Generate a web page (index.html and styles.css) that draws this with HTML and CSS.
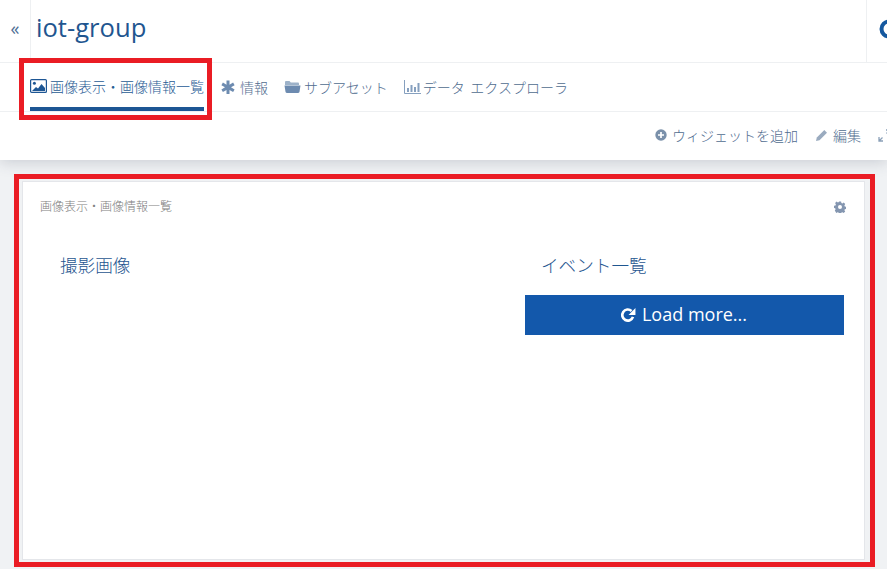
FILE: index.html
```html
<!DOCTYPE html>
<html lang="ja">
<head>
<meta charset="utf-8">
<title>iot-group</title>
<link rel="stylesheet" href="styles.css">
</head>
<body>
<header class="top">
  <div class="title-row">
    <div class="collapse">«</div>
    <h1 class="title">iot-group</h1>
    <div class="title-end"><svg class="round" viewBox="0 0 20 20"><circle cx="10" cy="10" r="7.5"/></svg></div>
  </div>
  <nav class="tabs">
    <a class="tab active">
      <svg class="ico ico-img" viewBox="0 0 17 14"><rect x=".6" y=".6" width="15.8" height="12.8" rx="1" fill="none" stroke="currentColor" stroke-width="1.2"/><circle cx="4.4" cy="4.3" r="1.5" fill="currentColor"/><path d="M2 12l4-4 2 1.6L11.500 5l3.500 4v3z" fill="currentColor"/></svg>
      <span>画像表示・画像情報一覧</span>
    </a>
    <a class="tab tab-info">
      <svg class="ico ico-ast" viewBox="0 0 14 14"><path d="M5.500 0.500h3v4.200l3.600-2.100 1.500 2.600L10 7.300l3.600 2.100-1.500 2.600-3.600-2.100v4.100h-3V10l-3.600 2-1.500-2.600L4 7.300.4 5.200l1.500-2.600 3.600 2.100z" fill="currentColor"/></svg>
      <span>情報</span>
    </a>
    <a class="tab tab-sub">
      <svg class="ico ico-folder" viewBox="0 0 17 13"><path d="M1 5V2.200C1 1.500 1.500 1 2.200 1h3.300l1.300 1.500h7c.7 0 1.200.5 1.200 1.200V5z" fill="#9db2c9"/><path d="M.5 5.600h16l-1 6.200c-.1.700-.6 1.200-1.300 1.200H2.800c-.7 0-1.200-.5-1.300-1.200z" fill="currentColor"/></svg>
      <span>サブアセット</span>
    </a>
    <a class="tab tab-chart">
      <svg class="ico ico-chart" viewBox="0 0 17 14"><path d="M.5 0v13.500H17" fill="none" stroke="currentColor" stroke-width="1"/><path d="M3 8h2v4H3zM6.500 5h2v7h-2zM10 7h2v5h-2zM13.500 3h2v9h-2z" fill="currentColor"/></svg>
      <span>データ エクスプローラ</span>
    </a>
  </nav>
  <div class="actions">
    <a class="action">
      <svg class="ico ico-plus" viewBox="0 0 12 12"><circle cx="6" cy="6" r="5.700" fill="currentColor"/><path d="M6 3v6M3 6h6" stroke="#fff" stroke-width="1.700"/></svg>
      <span>ウィジェットを追加</span>
    </a>
    <a class="action">
      <svg class="ico ico-pen" viewBox="0 0 13 13"><path d="M9.300 1l2.700 2.700-7.500 7.500L1 12l.8-3.500z" fill="currentColor"/></svg>
      <span>編集</span>
    </a>
    <a class="action">
      <svg class="ico ico-expand" viewBox="0 0 13 13"><path d="M8 1h4v4M12 1L8.500 4.500M5 12H1V8M1 12l3.500-3.500" fill="none" stroke="currentColor" stroke-width="1.300"/></svg>
    </a>
  </div>
</header>
<main class="content">
  <section class="card">
    <div class="card-head">
      <span class="card-title">画像表示・画像情報一覧</span>
      <svg class="gear" viewBox="0 0 12 12"><path fill-rule="evenodd" d="M4.900.5h2.200l.3 1.500 1 .4 1.300-.8 1.500 1.500-.8 1.300.4 1 1.500.3v2.200l-1.500.3-.4 1 .8 1.300-1.500 1.500-1.300-.8-1 .4-.3 1.500H4.900l-.3-1.500-1-.4-1.300.8L.8 9.500l.8-1.300-.4-1L0 6.900V4.700l1.500-.3.4-1-.8-1.300L2.600.6l1.300.8 1-.4zM6 4a2 2 0 1 0 0 4 2 2 0 0 0 0-4z"/></svg>
    </div>
    <div class="columns">
      <div class="col col-left">
        <h2 class="col-title">撮影画像</h2>
      </div>
      <div class="col col-right">
        <h2 class="col-title">イベント一覧</h2>
        <button class="load">
          <svg class="load-ico" viewBox="0 0 15 15"><path d="M12.200 9.300A5.200 5.200 0 1 1 10.800 3.700" fill="none" stroke="currentColor" stroke-width="2.500"/><path d="M14.500 1v6.500H8z" fill="currentColor"/></svg>
          <span>Load more...</span>
        </button>
      </div>
    </div>
  </section>
</main>
<div class="mark mark-tab"></div>
<div class="mark mark-card"></div>
</body>
</html>
```
FILE: styles.css
```css
* { box-sizing: border-box; }
html, body { height: 100%; }
body {
  margin: 0;
  width: 887px;
  height: 569px;
  overflow: hidden;
  position: relative;
  background: #f0f2f4;
  font-family: "Open Sans", "Noto Sans CJK JP", sans-serif;
  color: #49688f;
}
.top {
  background: #fff;
  height: 160px;
  box-shadow: 0 2px 14px rgba(60, 70, 90, .22);
  position: relative;
}
.title-row {
  height: 63px;
  display: flex;
  align-items: stretch;
  border-bottom: 1px solid #eef0f2;
}
.collapse {
  width: 31px;
  border-right: 1px solid #eef0f2;
  font-size: 18px;
  line-height: 57px;
  text-align: center;
  color: #4f6f96;
}
.title {
  flex: 1;
  margin: 0;
  padding-left: 5px;
  font-size: 25.600px;
  font-weight: 400;
  line-height: 55px;
  color: #1f5690;
}
.title-end {
  width: 21px;
  border-left: 1px solid #eef0f2;
  overflow: hidden;
  padding: 19px 0 0 12px;
}
.round { width: 20px; height: 20px; fill: none; stroke: #15589f; stroke-width: 4; display: block; }
.tabs {
  height: 49px;
  display: flex;
  padding-left: 30px;
  gap: 17px;
  border-bottom: 1px solid #eef0f2;
}
.tab {
  display: flex;
  align-items: center;
  gap: 3px;
  height: 48px;
  padding-bottom: 1px;
  font-size: 14px;
  color: #506c8f;
  white-space: nowrap;
  font-weight: 300;
}
.tab.active {
  color: #275b94;
  border-bottom: 4px solid #1d5694;
  padding-top: 3px;
}
.tab-info { gap: 5px; }
.tab-sub { margin-left: -1px; }
.tab-chart { gap: 2px; word-spacing: 2px; margin-left: -1px; }
.ico { display: block; flex: none; }
.ico-img { width: 17px; height: 14px; color: #1d5694; }
.ico-ast { width: 14px; height: 14px; color: #6d8bb0; }
.ico-folder { width: 17px; height: 13px; color: #6d8bb0; }
.ico-chart { width: 17px; height: 14px; color: #86a0bf; }
.actions {
  height: 46px;
  display: flex;
  align-items: center;
  gap: 17px;
  padding-left: 655px;
  overflow: hidden;
}
.action {
  display: flex;
  align-items: center;
  gap: 5px;
  font-size: 14px;
  font-weight: 300;
  color: #506c8f;
  white-space: nowrap;
  flex: none;
}
.ico-plus { width: 12px; height: 12px; color: #7a90aa; }
.ico-pen { width: 13px; height: 13px; color: #9aabbf; }
.ico-expand { width: 13px; height: 13px; color: #8ba0b8; }
.content {
  padding: 22px 23px 10px;
  height: 409px;
}
.card {
  background: #fff;
  height: 377px;
  width: 841px;
  box-shadow: 0 0 0 1px #e4e6ea;
}
.card-head {
  display: flex;
  justify-content: space-between;
  align-items: center;
  padding: 16px 18px 0 17px;
  height: 33px;
}
.card-title {
  font-size: 12px;
  line-height: 16px;
  font-weight: 300;
  color: #808080;
}
.gear { width: 12px; height: 12px; fill: #8496b0; display: block; }
.columns {
  display: flex;
  padding-top: 36px;
}
.col-left { width: 502px; padding-left: 37px; }
.col-right { width: 319px; }
.col-title {
  margin: 0;
  font-size: 17.600px;
  line-height: 28px;
  font-weight: 300;
  color: #1f5690;
}
.col-right .col-title { padding-left: 16px; }
.load {
  display: flex;
  align-items: center;
  justify-content: center;
  gap: 6px;
  width: 319px;
  height: 40px;
  margin-top: 16px;
  border: 0;
  background: #1358ab;
  color: #fff;
  font-family: "Open Sans", sans-serif;
  font-size: 18px;
  padding: 0 2px 2px 0;
}
.load-ico { width: 16px; height: 16px; display: block; margin-top: 2px; }
.mark {
  position: absolute;
  border: 5px solid #ea1c24;
  pointer-events: none;
}
.mark-tab { left: 19px; top: 58px; width: 193px; height: 62px; }
.mark-card { left: 14px; top: 174px; width: 861px; height: 393px; }
```
